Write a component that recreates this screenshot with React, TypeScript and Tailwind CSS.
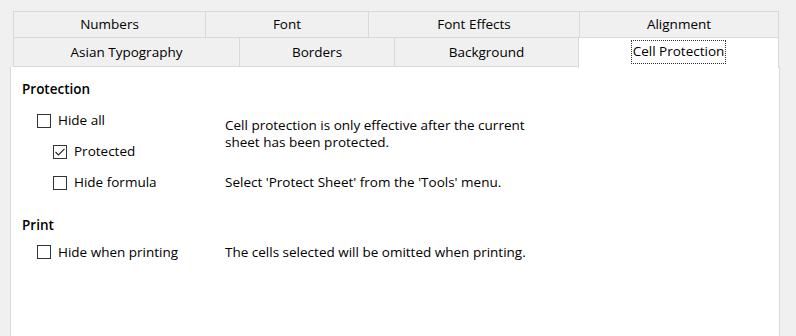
import React from "react";

const row1 = [
  { label: "Numbers", w: "w-[192px]" },
  { label: "Font", w: "w-[163px]" },
  { label: "Font Effects", w: "w-[211px]" },
  { label: "Alignment", w: "w-[200px]" },
];

const row2 = [
  { label: "Asian Typography", w: "w-[226px]" },
  { label: "Borders", w: "w-[155px]" },
  { label: "Background", w: "w-[184px]" },
];

function Checkbox({ checked }: { checked?: boolean }) {
  return (
    <span className="w-[14px] h-[14px] border border-[#333333] bg-white flex items-center justify-center shrink-0">
      {checked && (
        <svg width="12" height="12" viewBox="0 0 12 12" fill="none">
          <path d="M1.5 6 L4.5 9 L10.5 2.8" stroke="#222" strokeWidth="1.1" />
        </svg>
      )}
    </span>
  );
}

function CheckRow({
  label,
  checked,
  indent,
}: {
  label: string;
  checked?: boolean;
  indent?: boolean;
}) {
  return (
    <div className={`h-[31px] flex items-center gap-[7px] ${indent ? "pl-[31px]" : "pl-[15px]"}`}>
      <Checkbox checked={checked} />
      <span>{label}</span>
    </div>
  );
}

export default function App() {
  return (
    <div className="w-[796px] h-[336px] bg-[#f0f0f0] pt-[11px] pl-[10px] flex flex-col overflow-hidden font-['Open_Sans',sans-serif] text-[13.5px] text-black">
      <div className="ml-[3px] w-[766px] flex flex-col">
        <div className="flex h-[27px]">
          {row1.map((t, i) => (
            <div
              key={t.label}
              className={`${t.w} border-t border-b border-l ${i === row1.length - 1 ? "border-r" : ""} border-[#d9d9d9] flex items-center justify-center`}
            >
              {t.label}
            </div>
          ))}
        </div>
        <div className="flex h-[29px]">
          {row2.map((t) => (
            <div
              key={t.label}
              className={`${t.w} border-l border-b border-[#d9d9d9] flex items-center justify-center`}
            >
              {t.label}
            </div>
          ))}
          <div className="w-[201px] h-[30px] bg-white border-l border-r border-[#d9d9d9] relative z-10 flex justify-center pt-[2px]">
            <span className="h-[24px] border border-dotted border-[#333] px-[1px] leading-[21px]">
              Cell Protection
            </span>
          </div>
        </div>
      </div>
      <div className="w-[770px] flex-1 bg-white border-l border-r border-[#d9d9d9] pl-[11px] pt-[14px]">
        <div className="font-semibold leading-4 h-4">Protection</div>
        <div className="flex mt-[8px]">
          <div className="w-[203px]">
            <CheckRow label="Hide all" />
            <CheckRow label="Protected" checked indent />
            <CheckRow label="Hide formula" indent />
          </div>
          <div className="flex flex-col leading-[17px] pt-[12px]">
            <p>Cell protection is only effective after the current</p>
            <p>sheet has been protected.</p>
            <p className="mt-[23px]">Select 'Protect Sheet' from the 'Tools' menu.</p>
          </div>
        </div>
        <div className="font-semibold leading-4 h-4 mt-[19px]">Print</div>
        <div className="flex items-center mt-[8px] h-[22px]">
          <div className="w-[203px] flex items-center gap-[7px] pl-[15px]">
            <Checkbox />
            <span>Hide when printing</span>
          </div>
          <span>The cells selected will be omitted when printing.</span>
        </div>
      </div>
    </div>
  );
}
